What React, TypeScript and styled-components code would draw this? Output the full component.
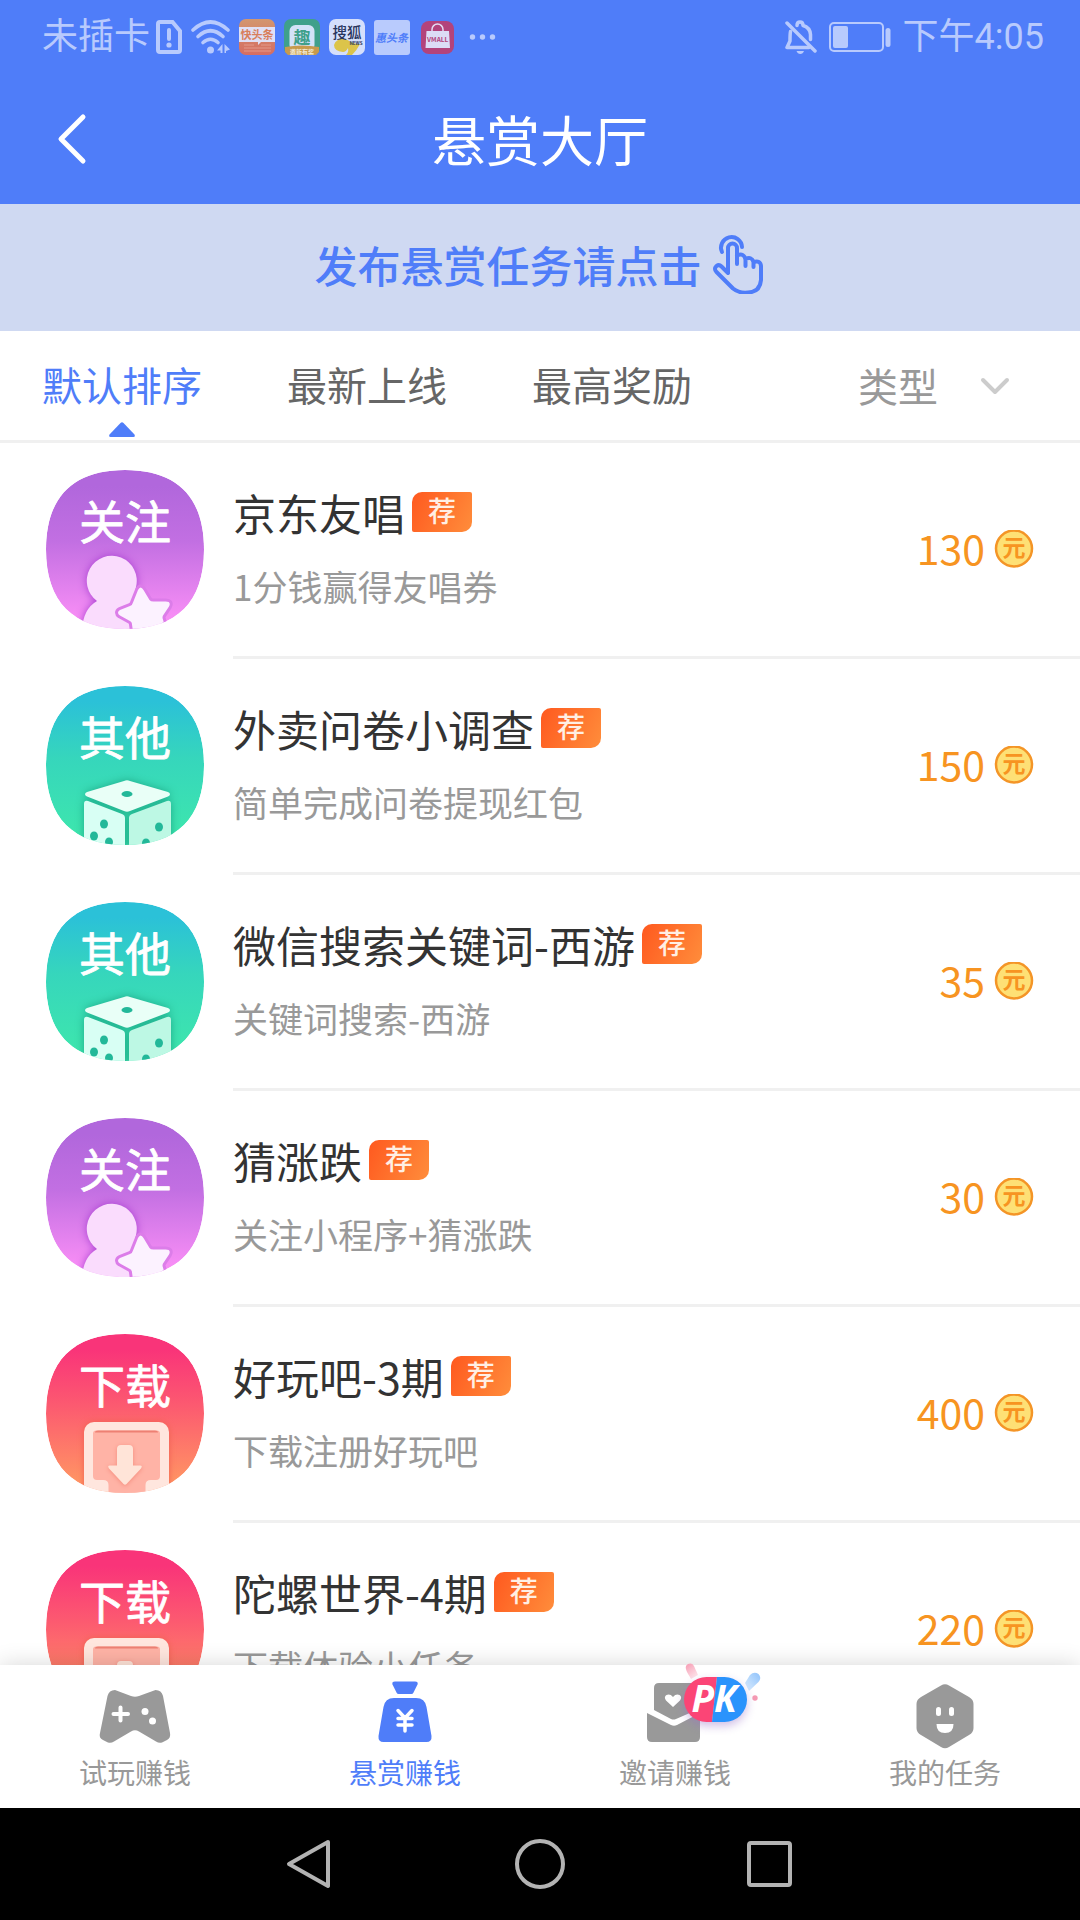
import React, { useState } from "react";
import styled, { createGlobalStyle } from "styled-components";

const GlobalStyle = createGlobalStyle`
  * { box-sizing: border-box; }
  body {
    margin: 0;
    background: #fff;
    font-family: "Noto Sans CJK SC", "Noto Sans", sans-serif;
    font-weight: 400;
  }
  button, select {
    font: inherit;
    color: inherit;
    border: 0;
    padding: 0;
    margin: 0;
    background: none;
    cursor: pointer;
  }
  h1, h2, p, ul { margin: 0; padding: 0; font-weight: inherit; }
  ul { list-style: none; }
  a { color: inherit; text-decoration: none; }
  svg { display: block; flex: none; }
`;

const Screen = styled.div`
  display: flex;
  flex-direction: column;
  height: 100vh;
  overflow: hidden;
`;

const StatusBar = styled.div`
  display: flex;
  align-items: center;
  justify-content: space-between;
  height: 74px;
  padding: 0 36px 0 42px;
  background: #4f7df9;
  color: #b8cafd;
  font-family: Roboto, "Noto Sans CJK SC", sans-serif;
  font-size: 36px;
  line-height: 48px;
`;

const StatusGroup = styled.div<{ $gap: number }>`
  display: flex;
  align-items: center;
  gap: ${(p) => p.$gap}px;
`;

const Header = styled.header`
  display: grid;
  grid-template-columns: 96px 1fr 96px;
  align-items: center;
  height: 130px;
  background: #4f7df9;
  color: #fff;
`;

const BackButton = styled.button`
  display: flex;
  justify-content: flex-end;
  padding-right: 9px;
`;

const PageTitle = styled.h1`
  text-align: center;
  font-size: 54px;
  line-height: 72px;
`;

const Banner = styled.a`
  display: flex;
  align-items: center;
  justify-content: center;
  gap: 10px;
  height: 127px;
  padding: 0 2px 8px 0;
  background: #cfd9f2;
  color: #4f7df9;
  font-size: 43px;
  font-weight: 500;
  line-height: 60px;
`;

const FilterBar = styled.nav`
  display: flex;
  align-items: center;
  gap: 85px;
  height: 112px;
  padding: 0 70px 0 42px;
  border-bottom: 3px solid #f0f0f0;
  font-size: 40px;
  line-height: 60px;
`;

const Tab = styled.button<{ $active: boolean }>`
  display: flex;
  flex-direction: column;
  align-items: center;
  gap: 8px;
  padding-top: 20px;
  color: ${(p) => (p.$active ? "#4f7df9" : "#666")};

  svg {
    visibility: ${(p) => (p.$active ? "visible" : "hidden")};
  }
`;

const TypeFilter = styled.label`
  display: grid;
  align-items: center;
  width: 152px;
  margin-left: auto;
  color: #999;

  > * { grid-area: 1 / 1; }
  svg { justify-self: end; pointer-events: none; }
`;

const TypeSelect = styled.select`
  appearance: none;
  width: 100%;
  padding-bottom: 2px;
  line-height: 60px;
`;

const TaskList = styled.ul`
  flex: 1;
  min-height: 0;
  overflow: hidden;
`;

const TaskRow = styled.li`
  display: flex;
  padding-left: 46px;
  height: 216px;
`;

const TaskIcon = styled.div`
  display: flex;
  align-items: center;
  padding-bottom: 3px;
  margin-right: 29px;
`;

const TaskBody = styled.div`
  flex: 1;
  display: flex;
  align-items: center;
  justify-content: space-between;
  padding-right: 46px;
  border-bottom: 3px solid #f0f0f0;
`;

const TaskText = styled.div`
  display: flex;
  flex-direction: column;
  gap: 20px;
`;

const TaskHeading = styled.div`
  display: flex;
  align-items: center;
  gap: 7px;
  height: 52px;
`;

const TaskTitle = styled.h2`
  color: #333;
  font-size: 43px;
  line-height: 52px;
`;

const TaskNote = styled.p`
  color: #999;
  font-size: 35px;
  line-height: 56px;
`;

const Badge = styled.span`
  width: 60px;
  height: 40px;
  border-radius: 10px 2px 10px 2px;
  background: linear-gradient(115deg, #ff591f, #ff8d3b);
  color: #ffefe4;
  font-size: 28px;
  font-weight: 500;
  line-height: 36px;
  text-align: center;
`;

const Reward = styled.div`
  display: flex;
  align-items: center;
  gap: 9px;
  color: #f79421;
  font-size: 41px;
  line-height: 52px;
`;

const Amount = styled.span`
  padding-bottom: 6px;
`;

const BottomNav = styled.nav`
  position: relative;
  display: grid;
  grid-template-columns: repeat(4, 1fr);
  background: #fff;
  box-shadow: 0 0 22px rgba(0, 0, 0, 0.16);
`;

const NavItem = styled.a<{ $active: boolean }>`
  display: flex;
  flex-direction: column;
  align-items: center;
  gap: 4px;
  padding: 13px 0 18px;
  color: ${(p) => (p.$active ? "#4f7df9" : "#999")};
  font-size: 28px;
  line-height: 36px;

  svg { overflow: visible; }
`;

const SystemBar = styled.div`
  position: relative;
  display: flex;
  align-items: center;
  justify-content: center;
  gap: 180px;
  height: 112px;
  background: #000;
  color: #b3b3b3;
`;

const CJK = '"Noto Sans CJK SC", sans-serif';

function SimIcon() {
  return (
    <svg width="26" height="34" viewBox="0 0 26 34" fill="none" stroke="currentColor" strokeWidth="4">
      <path d="M4 2h12.500L24 11v19a2 2 0 0 1-2 2H4a2 2 0 0 1-2-2V4a2 2 0 0 1 2-2z" />
      <path d="M13 10v9" strokeLinecap="round" />
      <circle cx="13" cy="25" r="2.600" fill="currentColor" stroke="none" />
    </svg>
  );
}

function WifiIcon() {
  return (
    <svg width="39" height="34" viewBox="0 0 39 34" fill="none" stroke="currentColor" strokeWidth="3.600" strokeLinecap="round">
      <path d="M2 10Q19.500 -6 37 10" />
      <path d="M7 16.500Q19.500 5 32 16.500" />
      <path d="M12 22.500Q19.500 16 27 22.500" />
      <circle cx="19.500" cy="30" r="3.500" fill="currentColor" stroke="none" />
      <path d="M31.500 24v9h-2v-2.500H26zM33.500 24l5.500 5.500-4 1.500v2h-1.500z" fill="currentColor" stroke="none" />
    </svg>
  );
}

function NewsAppIcon() {
  return (
    <svg width="36" height="36" viewBox="0 0 36 36">
      <defs>
        <linearGradient id="newsBg" x1="0" y1="0" x2="0" y2="1">
          <stop offset="0" stopColor="#d3966f" />
          <stop offset="1" stopColor="#d56d62" />
        </linearGradient>
      </defs>
      <rect width="36" height="36" rx="7" fill="url(#newsBg)" />
      <path d="M0 8h36v15H22l-3 3v-3H0z" fill="#dfe0f6" />
      <text x="18" y="19.500" textAnchor="middle" fontSize="11" fontWeight="700" fontFamily={CJK} fill="#d87e5c">快头条</text>
      <path d="M5 26h10M22 26h10M5 29h27M5 32h27" stroke="#e39a8b" strokeWidth="1" />
    </svg>
  );
}

function FunAppIcon() {
  return (
    <svg width="36" height="36" viewBox="0 0 36 36">
      <rect width="36" height="36" rx="7" fill="#3fa08b" />
      <rect x="5.500" y="6" width="25" height="26" rx="6" fill="#d3e2f8" />
      <text x="18" y="25" textAnchor="middle" fontSize="17" fontWeight="700" fontFamily={CJK} fill="#3fa08b">趣</text>
      <path d="M1 28q17-3 34 0v5l-3 3H4l-3-3z" fill="#c79a4d" />
      <text x="18" y="34.500" textAnchor="middle" fontSize="6" fontWeight="700" fontFamily={CJK} fill="#f2ead8">邀新有奖</text>
    </svg>
  );
}

function SohuAppIcon() {
  return (
    <svg width="36" height="36" viewBox="0 0 36 36">
      <rect width="36" height="36" rx="7" fill="#d5dffb" />
      <path d="M5 26q2-6 9-6.500 5 1 8 3.500 4 2 7 2h2q-3 6-8 11h-6q3-3 2-7-2 4-5 4-9-1-9-7z" fill="#dcc44a" />
      <text x="18" y="19" textAnchor="middle" fontSize="14.500" fontWeight="500" fontFamily={CJK} fill="#28345c">搜狐</text>
      <text x="27" y="26" textAnchor="middle" fontSize="4.500" fontWeight="700" fontFamily={CJK} fill="#28345c">NEWS</text>
    </svg>
  );
}

function HuiAppIcon() {
  return (
    <svg width="36" height="36" viewBox="0 0 36 36">
      <rect y="1" width="36" height="35" rx="3" fill="#b9cbfd" />
      <text x="17.500" y="22.500" textAnchor="middle" fontSize="11" fontWeight="700" fontStyle="italic" fontFamily={CJK} fill="#4f7df9">惠头条</text>
    </svg>
  );
}

function MallAppIcon() {
  return (
    <svg width="36" height="36" viewBox="0 0 36 36">
      <rect x="2" y="2" width="33" height="33" rx="8" fill="#b3437b" />
      <path d="M13 17V10.500a5.500 5.500 0 0 1 11 0V17" fill="none" stroke="#e3dcf3" strokeWidth="1.500" />
      <path d="M7.500 12h22.500l1 17H6.500z" fill="#dcdcf6" />
      <text x="18.700" y="22.500" textAnchor="middle" fontSize="6.500" fontWeight="700" fontFamily={CJK} fill="#b3437b">VMALL</text>
    </svg>
  );
}

function MoreDots() {
  return (
    <svg width="34" height="36" viewBox="0 0 34 36" fill="currentColor">
      <circle cx="8.500" cy="18" r="2.700" />
      <circle cx="18.500" cy="18" r="2.700" />
      <circle cx="28.500" cy="18" r="2.700" />
    </svg>
  );
}

function MutedBellIcon() {
  return (
    <svg width="32" height="34" viewBox="0 0 32 34" fill="none" stroke="currentColor" strokeWidth="3.500" strokeLinecap="round" strokeLinejoin="round">
      <path d="M5.500 11.500Q5 14 5 21l-3 6.500h22" />
      <path d="M12 5.500Q12 2 15 2t3 3.500q7 2 7.500 9v5" />
      <path d="M2 3l28 28" />
      <path d="M11.500 31h7.500q-1 3-3.700 3t-3.800-3z" fill="currentColor" stroke="none" />
    </svg>
  );
}

function BatteryIcon() {
  return (
    <svg width="62" height="30" viewBox="0 0 62 30" fill="currentColor">
      <rect x="1" y="1" width="53" height="28" rx="4" fill="none" stroke="currentColor" strokeWidth="2" />
      <rect x="4" y="4" width="15" height="22" rx="2" />
      <rect x="56.500" y="6" width="5" height="19" rx="2.500" />
    </svg>
  );
}

function BackIcon() {
  return (
    <svg width="30" height="52" viewBox="0 0 30 52" fill="none" stroke="currentColor" strokeWidth="5" strokeLinecap="round" strokeLinejoin="round">
      <path d="M26 4L4 26l22 22" />
    </svg>
  );
}

function TapIcon() {
  return (
    <svg width="52" height="60" viewBox="0 0 52 60" fill="none" stroke="currentColor" strokeWidth="4" strokeLinecap="round" strokeLinejoin="round">
      <path d="M10 18a10.500 10.500 0 1 1 20-5" />
      <path d="M16 39V14a4.500 4.500 0 0 1 9 0v16M25 21.500q7-3 8.500 4V32M33.500 25q6-3 8 3v5M41.500 28q7-2 7.500 4v14q-1 12-13 12.500-9 1-15-4L4.500 38q-3-3 0-6 2.500-2 5 .5L16 39" />
    </svg>
  );
}

function ActiveMark() {
  return (
    <svg width="26" height="15" viewBox="0 0 26 15" fill="currentColor">
      <path d="M11.500 1q1.500-1.500 3 0L25.500 12.500q1 2.500-1 2.500h-23q-2 0-1-2.500z" />
    </svg>
  );
}

function ChevronDown() {
  return (
    <svg width="30" height="18" viewBox="0 0 30 18" fill="none" stroke="#ccc" strokeWidth="4" strokeLinecap="round" strokeLinejoin="round">
      <path d="M3 3l12 12L27 3" />
    </svg>
  );
}

const TILE = "M79 0C131 0 158 27 158 79.500S131 159 79 159 0 132 0 79.500 27 0 79 0z";

type Kind = "follow" | "other" | "download";

const tiles: Record<Kind, { label: string; from: string; mid: string; to: string }> = {
  follow: { label: "关注", from: "#b167dc", mid: "#c26fe2", to: "#f68df5" },
  other: { label: "其他", from: "#2bc1d8", mid: "#36d6bc", to: "#3de5ae" },
  download: { label: "下载", from: "#f93479", mid: "#fc5a70", to: "#ff9364" },
};

function FollowArt() {
  return (
    <>
      <path
        d="M51 131a25 25 0 1 1 39-14q-1 4 0 7l-2 8q8 10 8 28H36q1-21 15-29z"
        fill="#fadcfd"
        filter="drop-shadow(0 0 4px #a63fd0)"
      />
      <path
        d="M92 120q2.500-5 5.500 0l6 10q1 1.500 4 1.500h12q6 0 3.500 5l-6 9q-1 2 0 4l3 12H87l-1-7q0-3-3-4l-9-5q-4-3 0-5.500l10-4q2.500-1 3-3.500z"
        fill="#fcf2ff"
        stroke="#dc7de9"
        strokeWidth="6"
        strokeLinejoin="round"
        paintOrder="stroke"
      />
    </>
  );
}

function DiceArt() {
  return (
    <>
      <g filter="drop-shadow(0 0 4px #1da988)">
        <path d="M78 95q3-1.500 6 0l38 11q4 2 0 4.500L84 125q-3 1.500-6 0L41 110.500q-4-2.500 0-4.500z" fill="#e9fff7" />
        <path d="M38 118q0-4 4-3l34 13q3 1 3 4v30H38z" fill="#d8fff4" />
        <path d="M83 132q0-3 3-4l35-13q4-1 4 3v44H83z" fill="#bdf8e4" />
      </g>
      <g fill="#23b899">
        <ellipse cx="81" cy="108" rx="5.500" ry="3" />
        <ellipse cx="58" cy="138" rx="4" ry="4.500" />
        <ellipse cx="48" cy="150" rx="4" ry="4.500" />
        <ellipse cx="63" cy="156" rx="4" ry="4.500" />
        <ellipse cx="113" cy="141" rx="4" ry="4.500" />
        <ellipse cx="100" cy="157" rx="4" ry="4.500" />
      </g>
    </>
  );
}

function DownloadArt() {
  return (
    <>
      <rect x="38" y="88" width="85" height="90" rx="10" fill="#ffe6de" filter="drop-shadow(0 0 3px #f0604f)" />
      <path d="M50 96.500h61q3 0 3 3V142q0 4-4 4h-5q-5.500 0-5.500 5v10h-37v-10q0-5-5.500-5h-6q-4 0-4-4V99.500q0-3 3-3z" fill="#ffb3a6" />
      <path d="M49 98.500q0-2 3-2h57q3 0 3 2z" fill="#ee8073" />
      <path d="M75 111h8q4 0 4 4v16.500h7q3 0 1 3L80.500 150q-1.500 1.500-3 0L63 134.500q-2-3 1-3h7V115q0-4 4-4z" fill="#ffe4d8" filter="drop-shadow(0 1px 2px #f58c7c)" />
    </>
  );
}

function TileIcon({ kind, uid }: { kind: Kind; uid: string }) {
  const tile = tiles[kind];
  return (
    <svg width="158" height="159" viewBox="0 0 158 159" role="img" aria-label={tile.label}>
      <defs>
        <linearGradient id={`bg-${uid}`} x1="0" y1="0" x2="0" y2="1">
          <stop offset="0.100" stopColor={tile.from} />
          <stop offset="0.450" stopColor={tile.mid} />
          <stop offset="0.920" stopColor={tile.to} />
        </linearGradient>
        <clipPath id={`clip-${uid}`}>
          <path d={TILE} />
        </clipPath>
      </defs>
      <g clipPath={`url(#clip-${uid})`}>
        <path d={TILE} fill={`url(#bg-${uid})`} />
        {kind === "follow" && <FollowArt />}
        {kind === "other" && <DiceArt />}
        {kind === "download" && <DownloadArt />}
      </g>
      <text x="79" y="69" textAnchor="middle" fontSize="46" fontFamily={CJK} fill="#fff" stroke="#fff" strokeWidth="0.800" strokeLinejoin="round">
        {tile.label}
      </text>
    </svg>
  );
}

function CoinIcon() {
  return (
    <svg width="40" height="40" viewBox="0 0 40 40">
      <circle cx="20" cy="18.500" r="18" fill="#fee075" stroke="#f49527" strokeWidth="2.500" />
      <text x="20" y="26" textAnchor="middle" fontSize="23" fontWeight="700" fontFamily={CJK} fill="#f79421">元</text>
    </svg>
  );
}

function GamepadIcon() {
  return (
    <svg width="72" height="72" viewBox="0 0 72 72">
      <path d="M16 12q-6 0-7.500 6L1 55q-1.500 5 3 7l5 2.500q3 1 6-1L32 53.500q4-2.500 8 0l17 10q3 2 6 1l5-2.500q4-2 3-7L64 18q-1.500-6-7.500-6L40 18q-4 1.500-8 0z" fill="currentColor" />
      <path d="M21.500 29.500v13M14.500 36h14.500" stroke="#fff" strokeWidth="4" strokeLinecap="round" />
      <circle cx="46" cy="33.500" r="3.500" fill="#fff" />
      <circle cx="53.500" cy="43" r="3.500" fill="#fff" />
    </svg>
  );
}

function MoneyBagIcon() {
  return (
    <svg width="72" height="72" viewBox="0 0 72 72">
      <path d="M26 3.500h20q3.500 0 2.500 3l-4 8q-.8 1.500-2 1.500h-13q-1.200 0-2-1.500l-4-8q-1-3 2.500-3z" fill="currentColor" />
      <path d="M25 20h22q9 0 10.500 9L62.500 58q.5 6-5 6h-43q-5.500 0-5-6l5-29q1.500-9 10.500-9z" fill="currentColor" />
      <path d="M29 32.500l7 7.500 7-7.500M29 40.500h14M29 47h14M36 40v13" fill="none" stroke="#fff" strokeWidth="3.500" strokeLinecap="round" strokeLinejoin="round" />
    </svg>
  );
}

function InviteIcon() {
  return (
    <svg width="72" height="72" viewBox="0 0 72 72">
      <defs>
        <linearGradient id="dropPink" x1="0" y1="0" x2="0.600" y2="1">
          <stop offset="0" stopColor="#f79ab2" />
          <stop offset="1" stopColor="#fde4ea" />
        </linearGradient>
        <linearGradient id="dropBlue" x1="1" y1="0" x2="0" y2="1">
          <stop offset="0" stopColor="#8fc2fb" />
          <stop offset="1" stopColor="#ddeefe" />
        </linearGradient>
        <clipPath id="pill">
          <rect x="45" y="-1" width="63" height="45" rx="22.500" />
        </clipPath>
      </defs>
      <path d="M20 5h40v26L37 41q-2.500 1-5 0L15 32V10q0-5 5-5z" fill="currentColor" />
      <path d="M8 35l24 12q3 1.500 6 0l23-12v24q0 5-5 5H13q-5 0-5-5z" fill="currentColor" />
      <path d="M34 29l-7-6.500q-2.500-3.500.5-5.500 3.500-1.500 6.500 2 3-3.500 6.500-2 3 2 .5 5.500z" fill="#fff" />
      <path d="M48-6q-3-6 1-8 4-1.500 6 2l4 9-7 4z" fill="url(#dropPink)" />
      <path d="M106 5l5-8q4-4 8.500-1 3.500 4 0 8L110 13z" fill="url(#dropBlue)" />
      <circle cx="116" cy="20" r="2.700" fill="#f59ab3" />
      <g filter="drop-shadow(0 4px 5px rgba(150, 110, 200, 0.450))">
        <g clipPath="url(#pill)">
          <path d="M45-1h33l-5 45H45z" fill="#fb4576" />
          <path d="M78-1h30v45H73z" fill="#2a93fc" />
        </g>
      </g>
      <text x="75" y="34" textAnchor="middle" fontSize="37" fontWeight="700" fontStyle="italic" fontFamily='"Open Sans", sans-serif' fill="#fff">PK</text>
    </svg>
  );
}

function ProfileIcon() {
  return (
    <svg width="72" height="72" viewBox="0 0 72 72">
      <path d="M32 7.500q4-2.500 8 0l20 11.500q4.500 2.500 4.500 7v24q0 4.500-4.500 7L40 69q-4 2.500-8 0L12 57q-4.500-2.500-4.500-7V26q0-4.500 4.500-7z" fill="currentColor" />
      <rect x="27" y="29" width="5" height="9" rx="2.500" fill="#fff" />
      <rect x="40" y="29" width="5" height="9" rx="2.500" fill="#fff" />
      <path d="M27.500 46h17q0 9-8.500 9t-8.500-9z" fill="#fff" />
    </svg>
  );
}

interface Task {
  title: string;
  note: string;
  reward: number;
  kind: Kind;
}

const tasks: Task[] = [
  { title: "京东友唱", note: "1分钱赢得友唱券", reward: 130, kind: "follow" },
  { title: "外卖问卷小调查", note: "简单完成问卷提现红包", reward: 150, kind: "other" },
  { title: "微信搜索关键词-西游", note: "关键词搜索-西游", reward: 35, kind: "other" },
  { title: "猜涨跌", note: "关注小程序+猜涨跌", reward: 30, kind: "follow" },
  { title: "好玩吧-3期", note: "下载注册好玩吧", reward: 400, kind: "download" },
  { title: "陀螺世界-4期", note: "下载体验小任务", reward: 220, kind: "download" },
];

const sortTabs = ["默认排序", "最新上线", "最高奖励"];

const navItems = [
  { label: "试玩赚钱", Icon: GamepadIcon },
  { label: "悬赏赚钱", Icon: MoneyBagIcon },
  { label: "邀请赚钱", Icon: InviteIcon },
  { label: "我的任务", Icon: ProfileIcon },
];

export default function App() {
  const [sort, setSort] = useState(0);

  return (
    <Screen>
      <GlobalStyle />
      <StatusBar>
        <StatusGroup $gap={6}>
          <span>未插卡</span>
          <StatusGroup $gap={9}>
            <SimIcon />
            <WifiIcon />
            <NewsAppIcon />
            <FunAppIcon />
            <SohuAppIcon />
            <HuiAppIcon />
            <MallAppIcon />
            <MoreDots />
          </StatusGroup>
        </StatusGroup>
        <StatusGroup $gap={12}>
          <MutedBellIcon />
          <BatteryIcon />
          <time>下午4:05</time>
        </StatusGroup>
      </StatusBar>

      <Header>
        <BackButton type="button" aria-label="返回">
          <BackIcon />
        </BackButton>
        <PageTitle>悬赏大厅</PageTitle>
      </Header>

      <Banner href="#publish">
        发布悬赏任务请点击
        <TapIcon />
      </Banner>

      <FilterBar>
        {sortTabs.map((label, i) => (
          <Tab key={label} type="button" $active={i === sort} onClick={() => setSort(i)}>
            {label}
            <ActiveMark />
          </Tab>
        ))}
        <TypeFilter>
          <TypeSelect aria-label="类型">
            <option>类型</option>
          </TypeSelect>
          <ChevronDown />
        </TypeFilter>
      </FilterBar>

      <TaskList>
        {tasks.map((task, i) => (
          <TaskRow key={task.title}>
            <TaskIcon>
              <TileIcon kind={task.kind} uid={`${task.kind}-${i}`} />
            </TaskIcon>
            <TaskBody>
              <TaskText>
                <TaskHeading>
                  <TaskTitle>{task.title}</TaskTitle>
                  <Badge>荐</Badge>
                </TaskHeading>
                <TaskNote>{task.note}</TaskNote>
              </TaskText>
              <Reward>
                <Amount>{task.reward}</Amount>
                <CoinIcon />
              </Reward>
            </TaskBody>
          </TaskRow>
        ))}
      </TaskList>

      <BottomNav>
        {navItems.map(({ label, Icon }, i) => (
          <NavItem key={label} href={`#tab-${i}`} $active={i === 1}>
            <Icon />
            {label}
          </NavItem>
        ))}
      </BottomNav>

      <SystemBar>
        <button type="button" aria-label="后退">
          <svg width="50" height="50" viewBox="0 0 50 50" fill="none" stroke="currentColor" strokeWidth="4" strokeLinejoin="round">
            <path d="M43 3L4 25l39 22z" />
          </svg>
        </button>
        <button type="button" aria-label="主页">
          <svg width="50" height="50" viewBox="0 0 50 50" fill="none" stroke="currentColor" strokeWidth="4">
            <circle cx="25" cy="25" r="23" />
          </svg>
        </button>
        <button type="button" aria-label="最近任务">
          <svg width="50" height="50" viewBox="0 0 50 50" fill="none" stroke="currentColor" strokeWidth="4">
            <rect x="4" y="4" width="41" height="42" rx="2" />
          </svg>
        </button>
      </SystemBar>
    </Screen>
  );
}
